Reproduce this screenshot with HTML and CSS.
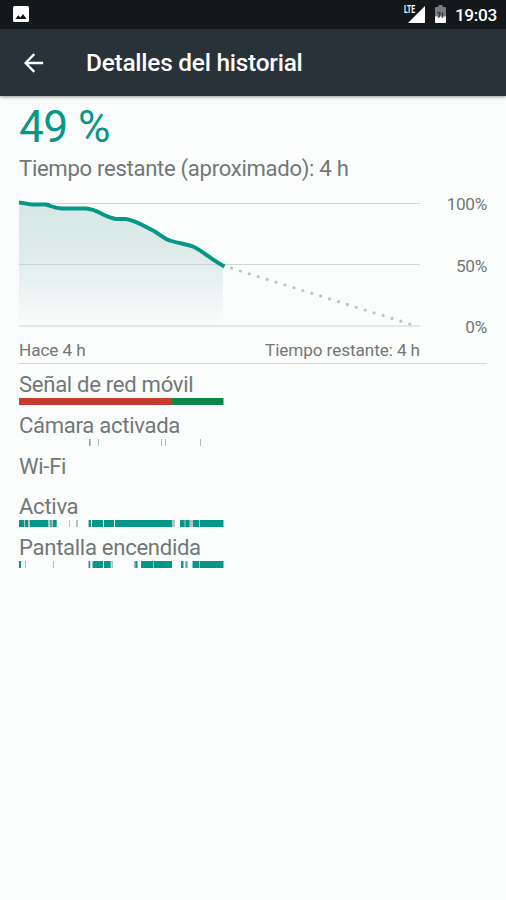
FILE: index.html
```html
<!DOCTYPE html>
<html lang="es">
<head>
<meta charset="utf-8">
<title>Detalles del historial</title>
<link rel="stylesheet" href="styles.css">
</head>
<body>
<header>
  <div class="status">
    <svg class="picture" width="16" height="16" viewBox="0 0 16 16"><rect width="16" height="16" rx="1.5" fill="#fff"/><path d="M2.5 13 5.3 9.3 7.3 11.6 10 8 13.6 13Z" fill="#13181b"/></svg>
    <div class="system">
      <span class="lte">LTE</span>
      <svg class="signal" width="17" height="17" viewBox="0 0 17 17"><path d="M0 17 17 0V17Z" fill="#fff"/></svg>
      <svg class="battery" width="11" height="18" viewBox="0 0 11 18"><path d="M3.5 0h4v2H10q1 0 1 1v9H0V3q0-1 1-1h2.500Z" fill="#777d80"/><path d="M0 11.500h2.500l1 1.500 1.500-1.500h1l1.500 1.500 1-1.500H11V17q0 1-1 1H1q-1 0-1-1Z" fill="#fff"/><path d="M2.500 8.500q1-2 2.500-.5L4 12M7.500 7.500v4" fill="none" stroke="#30383b" stroke-width="1.300"/></svg>
      <span class="clock">19:03</span>
    </div>
  </div>
  <div class="toolbar">
    <svg width="20" height="20" viewBox="0 0 20 20"><path d="M19.200 10H1.700M10.300 1.100 1.500 10l8.800 8.900" fill="none" stroke="#fff" stroke-width="2.300"/></svg>
    <h1>Detalles del historial</h1>
  </div>
</header>
<main>
  <div class="level">49 %</div>
  <div class="remaining">Tiempo restante (aproximado): 4 h</div>
  <div class="chart">
    <svg width="401" height="132" viewBox="19 198 401 132">
      <defs><linearGradient id="fade" x1="0" y1="202" x2="0" y2="326" gradientUnits="userSpaceOnUse"><stop offset="0" stop-color="#d6e8e6"/><stop offset=".45" stop-color="#deeceb"/><stop offset="1" stop-color="#fbfcfc"/></linearGradient></defs>
      <path d="M19 202.500C26 203 28 204.500 34 204.500H46C52 206 54 208.500 62 208.500H86C98 209 103 217 116 219H126C137 221 144 226 154 231C162 236 166 241 171 241C179 244 187 245 194 247C204 252 212 260 223 265.500V326H19Z" fill="url(#fade)"/>
      <path d="M19 203.500H420M19 264.500H420M19 326H420" stroke="#cbd6d5" stroke-width="1.200"/>
      <path d="M231.500 268.200 413 325" stroke="#b7c6c4" stroke-width="3.200" stroke-linecap="round" stroke-dasharray="0 9.340"/>
      <path d="M19 202.500C26 203 28 204.500 34 204.500H46C52 206 54 208.500 62 208.500H86C98 209 103 217 116 219H126C137 221 144 226 154 231C162 236 166 240 170 240.500C179 243.500 187 244 194 247C204 252 212 260 224.500 266.500" fill="none" stroke="#079788" stroke-width="3.900"/>
    </svg>
    <div class="scale"><span>100%</span><span>50%</span><span>0%</span></div>
  </div>
  <div class="times"><span>Hace 4 h</span><span>Tiempo restante: 4 h</span></div>
  <section>
    <div class="row"><h2>Señal de red móvil</h2>
      <svg width="205" height="7" viewBox="19 0 205 7"><path d="M19 0h153v7H19Z" fill="#c73d2d"/><path d="M172 0h51.500v7H172Z" fill="#11864a"/></svg></div>
    <div class="row"><h2>Cámara activada</h2>
      <svg width="205" height="7" viewBox="19 0 205 7"><path d="M89 0h1.500v7H89Z" fill="#72aaa4"/><path d="M98 0h1v7h-1ZM161 0h1v7h-1ZM165 0h1v7h-1ZM200 0h1v7h-1Z" fill="#a9c2bf"/></svg></div>
    <div class="row"><h2>Wi-Fi</h2><svg width="205" height="7"></svg></div>
    <div class="row"><h2>Activa</h2>
      <svg width="205" height="7" viewBox="19 0 205 7"><path d="M19 0h38v7H19ZM172 0h3v7h-3ZM69 0h1v7h-1ZM76 0h2v7h-2ZM88 0h2v7h-2ZM180 0h13v7h-13Z" fill="#b1c6c3"/><path d="M19 0h5v7h-5ZM25 0h3v7h-3ZM30 0h18v7H30ZM53 0h3.500v7H53ZM50.500 0h1v7h-1ZM89 0H91v7h-2ZM92 0h11v7H92ZM104 0h10v7h-10ZM115 0h57v7h-57ZM180 0h4.500v7H180ZM185.500 0h4v7h-4ZM193 0h6v7h-6ZM199.600 0h23.900v7h-23.900Z" fill="#079788"/></svg></div>
    <div class="row"><h2>Pantalla encendida</h2>
      <svg width="205" height="7" viewBox="19 0 205 7"><path d="M25 0h1v7h-1ZM53 0h1v7h-1ZM88 0h2v7h-2ZM112 0h1v7h-1ZM134 0h2v7h-2ZM186 0h2v7h-2Z" fill="#a4c2be"/><path d="M19 0h2v7h-2ZM89 0h1.200v7H89ZM92.500 0H103v7H92.500ZM104 0h6v7h-6ZM110.300 0h1v7h-1ZM135.500 0h2v7h-2ZM141 0h12v7h-12ZM153.500 0h18.500v7h-18.500ZM181 0h2.500v7H181ZM185.500 0h1v7h-1ZM192.500 0h6.500v7h-6.500ZM199.500 0h24v7h-24Z" fill="#079788"/></svg></div>
  </section>
</main>
</body>
</html>
```

FILE: styles.css
```css
* { box-sizing: border-box; }
body {
  margin: 0;
  width: 506px;
  height: 900px;
  overflow: hidden;
  background: #fbfcfc;
  color: #727877;
  font-family: Roboto, sans-serif;
}
svg { display: block; flex: none; }
header { box-shadow: 0 1px 3px rgba(0, 0, 0, .4); }
.status {
  height: 29px;
  background: #13181b;
  color: #fff;
  display: flex;
  justify-content: space-between;
  padding: 0 9px 0 13px;
}
.picture { margin-top: 6px; }
.system { display: flex; }
.lte { font-size: 10px; font-weight: 700; line-height: 10px; margin-top: 5px; width: 12px; transform: scaleX(.68); transform-origin: left; margin-right: -8px; }
.signal { margin-top: 6px; }
.battery { margin: 5px 9px 0 10px; }
.clock { font-size: 17.2px; font-weight: 500; line-height: 30px; letter-spacing: -.3px; }
.toolbar {
  height: 67px;
  background: #283238;
  color: #fff;
  display: flex;
  align-items: center;
  padding-left: 24px;
  gap: 42px;
}
h1 { margin: 1px 0 0; font-size: 24.4px; font-weight: 500; line-height: 30px; letter-spacing: -.23px; }
main { padding: 5px 19px 0; }
.level { color: #079788; font-size: 44.3px; line-height: 52px; letter-spacing: -.6px; }
.remaining { font-size: 22.1px; line-height: 30px; letter-spacing: -.3px; }
.chart { display: flex; justify-content: space-between; margin-top: 15px; }
.scale { display: flex; flex-direction: column; justify-content: space-between; height: 143px; margin-top: -4px; margin-bottom: -7px; text-align: right; font-size: 17.2px; line-height: 20px; letter-spacing: -.3px; }
.times {
  display: flex;
  justify-content: space-between;
  height: 34px;
  padding: 10px 67px 0 0;
  border-bottom: 1.5px solid #cedbd9;
  font-size: 17.2px;
  line-height: 20px;
  letter-spacing: -.1px;
}
section { padding-top: 7px; }
.row { height: 40.8px; }
h2 { margin: 0 0 1px; font-size: 22.1px; font-weight: 400; line-height: 26px; letter-spacing: -.3px; }
```
